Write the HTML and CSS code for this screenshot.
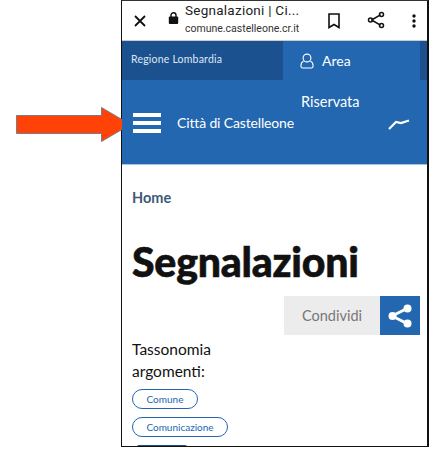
FILE: index.html
```html
<!DOCTYPE html>
<html lang="it">
<head>
<meta charset="utf-8">
<title>Segnalazioni</title>
<link rel="stylesheet" href="styles.css">
</head>
<body>
<svg class="arrow" width="116" height="36" viewBox="0 0 116 36"><path d="M0.500 8.500H85.500V0.500L114.500 17.500L85.500 34.500V26.500H0.500Z" fill="#ff4208" stroke="#7d7d80"/></svg>
<div class="phone">
  <div class="chrome">
    <svg class="ic-close" width="14" height="14" viewBox="0 0 14 14"><path d="M2 2L12 12M12 2L2 12" stroke="#111" stroke-width="1.800" fill="none"/></svg>
    <svg class="ic-lock" width="11" height="14" viewBox="0 0 11 14"><path d="M3 6V4.200a2.500 2.500 0 0 1 5 0V6" stroke="#111" stroke-width="1.400" fill="none"/><rect x="0.800" y="5.500" width="9.400" height="7.500" rx="1" fill="#111"/></svg>
    <div class="url">
      <div class="url-title">Segnalazioni | Ci...</div>
      <div class="url-host">comune.castelleone.cr.it</div>
    </div>
    <svg class="ic-mark" width="12" height="16" viewBox="0 0 12 16"><path d="M1 1H11V14.500L6 11.500L1 14.500Z" stroke="#111" stroke-width="1.600" fill="none"/></svg>
    <svg class="ic-share" width="18" height="18" viewBox="0 0 18 18"><g stroke="#111" stroke-width="1.500" fill="none"><path d="M4.500 9L13.500 3.800M4.500 9L13.500 14.200"/><circle cx="3.500" cy="9" r="2"/><circle cx="14.500" cy="3.600" r="2"/><circle cx="14.500" cy="14.400" r="2"/></g></svg>
    <svg class="ic-more" width="4" height="14" viewBox="0 0 4 14"><circle cx="2" cy="2" r="1.700" fill="#111"/><circle cx="2" cy="7" r="1.700" fill="#111"/><circle cx="2" cy="12" r="1.700" fill="#111"/></svg>
  </div>
  <header class="site-head">
    <div class="strip">
      <div class="region">Regione Lombardia</div>
      <div class="area">
        <svg width="14" height="16" viewBox="0 0 14 16"><g stroke="#fff" stroke-width="1.100" fill="none"><circle cx="7" cy="5" r="3.900"/><path d="M3.500 8.300C1.800 9 1 10.400 1 12.200V13.400C1 14.300 1.600 15 2.600 15H11.400C12.400 15 13 14.300 13 13.400V12.200C13 10.400 12.200 9 10.500 8.300"/></g></svg>
        <span>Area</span>
      </div>
      <div class="strip-end"></div>
    </div>
    <div class="riservata">Riservata</div>
    <div class="brand">
      <div class="burger"><i></i><i></i><i></i></div>
      <div class="city">Città di Castelleone</div>
      <svg class="ic-trend" width="22" height="12" viewBox="0 0 22 12"><path d="M1 11L8 4L13 5L21 2.500" stroke="#fff" stroke-width="2.200" fill="none"/></svg>
    </div>
  </header>
  <main class="content">
    <div class="crumb">Home</div>
    <h1>Segnalazioni</h1>
    <div class="share-row">
      <div class="share-label">Condividi</div>
      <div class="share-btn"><svg width="26" height="24" viewBox="0 0 26 24"><path d="M5 12L20 4.500M5 12L20 19.500" stroke="#fff" stroke-width="3" fill="none"/><circle cx="5.500" cy="12" r="4" fill="#fff"/><circle cx="20.500" cy="4.500" r="4" fill="#fff"/><circle cx="20.500" cy="19.500" r="4" fill="#fff"/></svg></div>
    </div>
    <div class="tax-label">Tassonomia<br>argomenti:</div>
    <div class="tags">
      <span class="tag tag-a">Comune</span>
      <span class="tag tag-b">Comunicazione</span>
      <span class="tag-dark"></span>
    </div>
  </main>
</div>
</body>
</html>
```
FILE: styles.css
```css
* { box-sizing: border-box; }
html, body { margin: 0; height: 456px; overflow: hidden; background: #fff; }
body { padding: 0 0 0 121px; font-family: "Lato", "Liberation Sans", sans-serif; }
.arrow { position: absolute; left: 16px; top: 107px; }
.phone { width: 308px; height: 447px; border: 1px solid #111; border-width: 1px 2px 1px 1px; border-top-color: #333; overflow: hidden; background: #fff; }
.chrome { height: 40px; display: flex; align-items: center; border-bottom: 1px solid #ccc; padding-left: 11px; position: relative; }
.ic-close { flex: none; margin-top: 1px; }
.ic-lock { flex: none; margin-left: 21px; margin-top: -6px; }
.url { width: 145px; margin-left: 6px; font-family: "Roboto", sans-serif; color: #222; margin-top: -3px; }
.url-title { font-size: 13.500px; line-height: 16px; white-space: nowrap; letter-spacing: .25px; }
.url-host { font-size: 10.500px; line-height: 15px; margin-top: 3px; white-space: nowrap; color: #333; }
.ic-mark { flex: none; margin-left: -2px; }
.ic-share { flex: none; margin-left: 27px; margin-top: -2px; }
.ic-more { flex: none; margin-left: 27px; }
.site-head { height: 124px; background: #2267b0; border-bottom: 1px solid #a9c4df; position: relative; }
.strip { display: flex; height: 39px; }
.region { width: 161px; background: #1c5190; color: #dfe8f2; font-size: 10.500px; padding: 12px 0 0 9px; letter-spacing: .2px; }
.area { width: 137px; display: flex; align-items: center; padding-left: 17px; gap: 8px; color: #fff; font-size: 14px; }
.strip-end { flex: 1; background: #1c5190; }
.riservata { position: absolute; left: 179px; top: 52px; color: #fff; font-size: 14.500px; }
.brand { display: flex; align-items: center; height: 85px; padding: 0 0 0 11px; }
.burger { width: 28px; display: flex; flex-direction: column; gap: 4px; }
.burger i { display: block; height: 4px; background: #fff; }
.city { width: 117px; margin-left: 16px; color: #fff; font-size: 14px; letter-spacing: -.15px; white-space: nowrap; }
.ic-trend { margin-left: 94px; margin-top: 3px; }
.content { padding: 25px 7px 0 10px; }
.crumb { font-size: 14.500px; font-weight: 700; color: #3d5a78; line-height: 18px; margin-top: -1px; }
h1 { margin: 30px 0 0; font-size: 41px; line-height: 50px; font-weight: 900; color: #111; font-family: "Lato", sans-serif; letter-spacing: -.2px; -webkit-text-stroke: .6px #111; }
.share-row { display: flex; justify-content: flex-end; margin-top: 9px; }
.share-label { width: 96px; height: 39px; background: #ececec; color: #777; font-size: 14.500px; display: flex; align-items: center; justify-content: center; }
.share-btn { width: 40px; height: 39px; background: #2267b0; display: flex; align-items: center; justify-content: center; }
.tax-label { margin-top: 3px; font-size: 15.500px; line-height: 22px; color: #111; }
.tags { display: flex; flex-direction: column; align-items: flex-start; gap: 8px; margin-top: 7px; }
.tag { height: 20px; border: 1px solid #2267b0; border-radius: 10px; color: #2267b0; font-size: 10px; line-height: 18px; text-align: center; }
.tag-a { width: 66px; }
.tag-b { width: 96px; }
.tag-dark { display: block; width: 50px; height: 2px; background: #1c4f86; border-radius: 2px 2px 0 0; margin-left: 5px; }
```
